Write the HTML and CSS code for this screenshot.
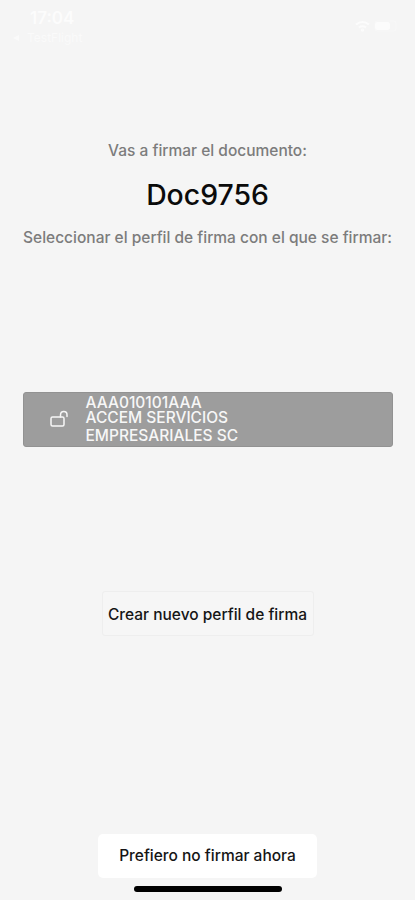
FILE: index.html
```html
<!DOCTYPE html>
<html lang="es">
<head>
<meta charset="utf-8">
<title>Firmar documento</title>
<link rel="stylesheet" href="styles.css">
</head>
<body>
<div class="screen">
  <header class="status">
    <div class="status-left">
      <span class="time">17:04</span>
      <span class="back"><svg width="8" height="8" viewBox="0 0 8 8"><path d="M7 1v6L1 4z" fill="currentColor"/></svg>TestFlight</span>
    </div>
    <div class="status-right">
      <svg width="15" height="12" viewBox="0 0 15 12" fill="none" stroke="currentColor" stroke-width="2"><path d="M1 4.500q6.500-5 13 0M4 7.500q3.500-2.500 7 0"/><circle cx="7.500" cy="10" r=".6"/></svg>
      <svg width="25" height="12" viewBox="0 0 25 12"><rect x="1" y="1" width="21" height="10" rx="3" fill="none" stroke="currentColor" opacity=".3"/><rect x="1" y="2" width="15" height="8" rx="2.500" fill="currentColor"/></svg>
    </div>
  </header>
  <main class="content">
    <p class="label">Vas a firmar el documento:</p>
    <h1 class="title">Doc9756</h1>
    <p class="label hint">Seleccionar el perfil de firma con el que se firmar:</p>
    <div class="profile">
      <svg class="lock" width="20" height="18" viewBox="0 0 20 18" fill="none" stroke="currentColor" stroke-width="1.500"><rect x="1" y="7" width="13" height="9" rx="1.500"/><path d="M10.500 7V5q0-3.500 3.300-3.500T17 5v1.500" stroke-linecap="round"/></svg>
      <div class="profile-text">
        <span class="rfc">AAA010101AAA</span>
        <span class="name">ACCEM SERVICIOS<br>EMPRESARIALES SC</span>
      </div>
    </div>
    <button class="create">Crear nuevo perfil de firma</button>
  </main>
  <footer class="footer">
    <button class="skip">Prefiero no firmar ahora</button>
    <div class="home"></div>
  </footer>
</div>
</body>
</html>
```
FILE: styles.css
```css
* { box-sizing: border-box; }
body { margin: 0; background: #f5f5f5; font-family: Inter, "Liberation Sans", sans-serif; }
.screen { width: 415px; height: 900px; display: flex; flex-direction: column; overflow: hidden; }
.status { height: 50px; display: flex; justify-content: space-between; padding: 9px 16px 0 12px; color: #fcfcfc; }
.status-left { display: flex; flex-direction: column; }
.time { padding-left: 18px; font-size: 17px; line-height: 19px; font-weight: 600; }
.back { display: flex; align-items: center; gap: 7px; font-size: 12px; line-height: 20px; color: #fafafa; }
.status-right { display: flex; gap: 4px; padding-top: 11px; }
.content { flex: 1; display: flex; flex-direction: column; align-items: center; padding-top: 91px; }
.label { margin: 0; font-size: 15.5px; line-height: 20px; font-weight: 500; color: #7c7c7c; white-space: nowrap; }
.title { margin: 16px 0; font-size: 28.4px; line-height: 35px; font-weight: 500; color: #0b0b0b; }
.profile { width: 370px; height: 55px; margin-top: 144px; padding: 2px 0 0 26px; display: flex; align-items: center; background: #9d9d9d; border: 1px solid #929292; border-radius: 3px; color: #f7f7f7; }
.lock { flex: none; margin: 0 16px 3px 0; }
.profile-text { display: flex; flex-direction: column; font-size: 15.5px; font-weight: 500; white-space: nowrap; }
.rfc { line-height: 12px; }
.name { line-height: 18px; }
button { font: 500 15.5px/20px Inter, "Liberation Sans", sans-serif; color: #151515; padding: 0; white-space: nowrap; }
.create { width: 212px; height: 45px; margin-top: 144px; padding-top: 2px; background: #f6f6f6; border: 1px solid #eee; border-radius: 3px; }
.footer { display: flex; flex-direction: column; align-items: center; padding-bottom: 8px; }
.skip { width: 219px; height: 44px; background: #fff; border: 0; border-radius: 5px; }
.home { width: 148px; height: 6px; margin-top: 8px; border-radius: 3px; background: #000; }
```
